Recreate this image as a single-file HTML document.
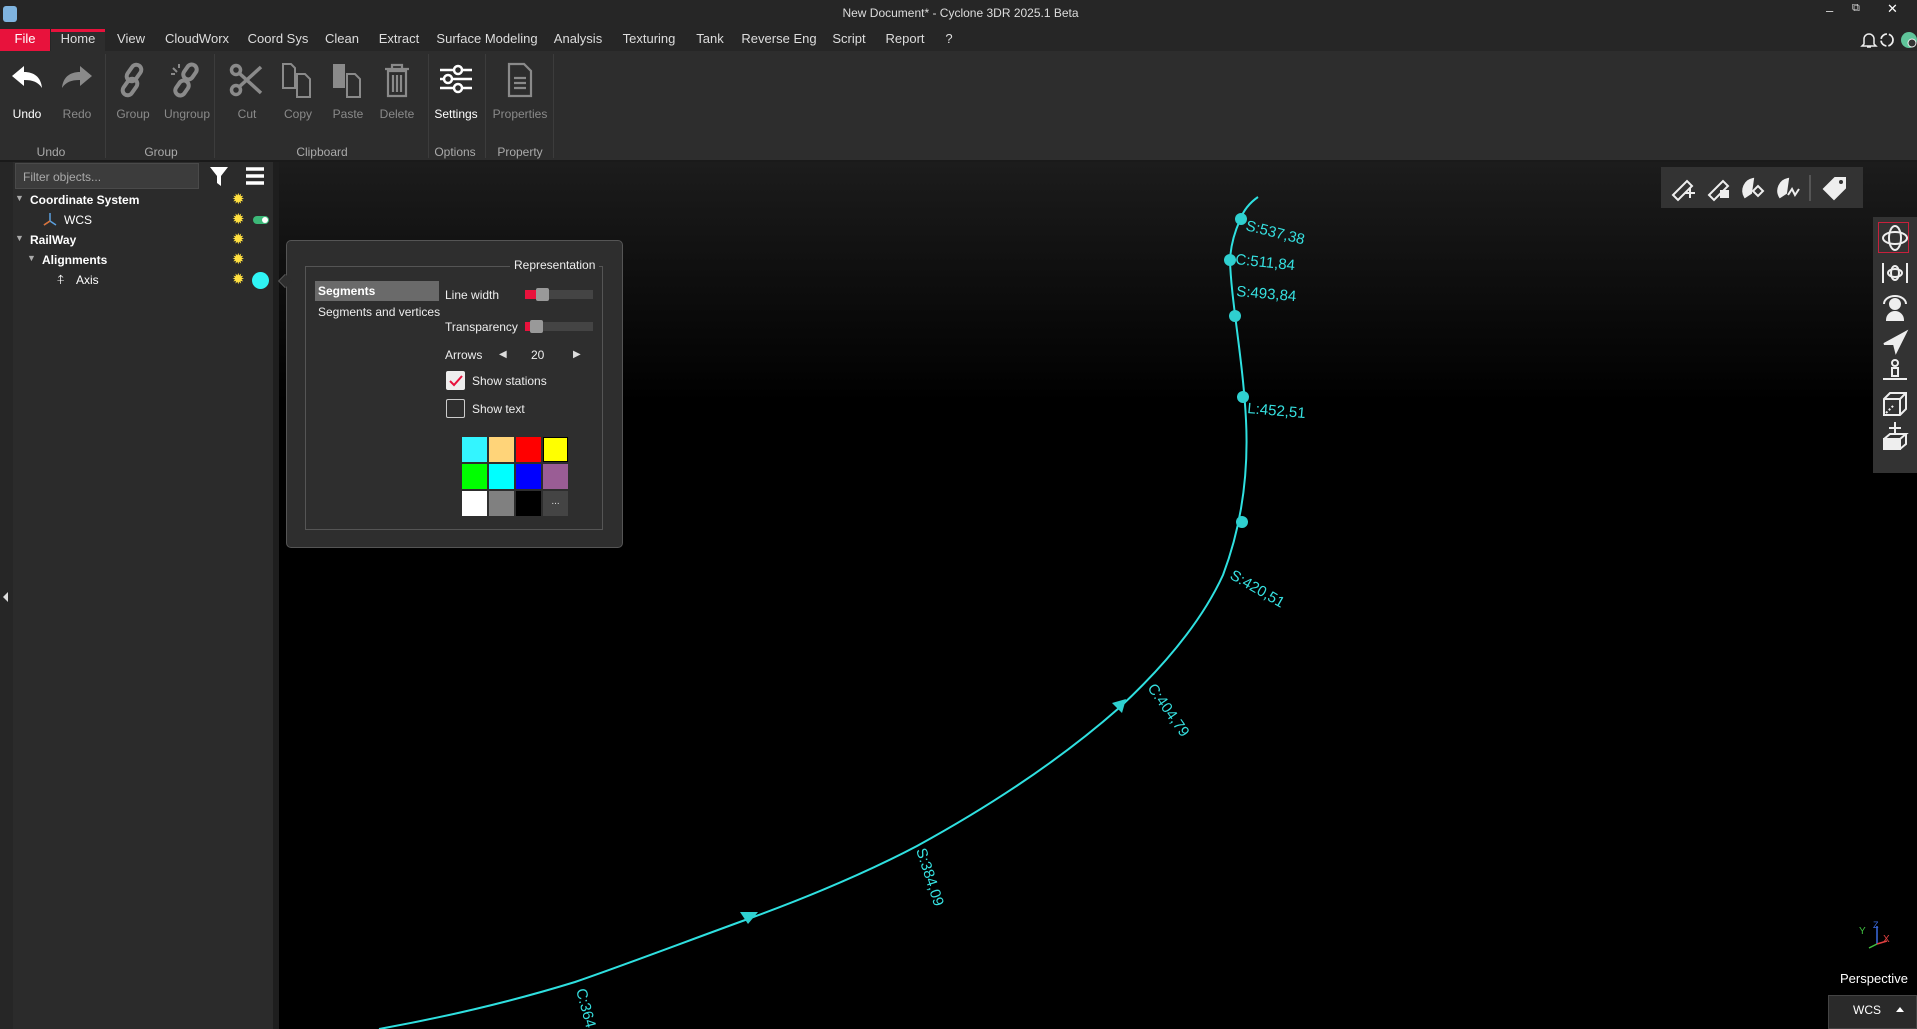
<!DOCTYPE html>
<html><head><meta charset="utf-8"><style>
*{margin:0;padding:0;box-sizing:border-box}
body{width:1917px;height:1029px;overflow:hidden;background:#000;font-family:"Liberation Sans",sans-serif;color:#ddd;position:relative}
.a{position:absolute}
.tab{position:absolute;top:31px;font-size:13px;color:#ddd;transform:translateX(-50%);white-space:nowrap}
.btn{position:absolute;top:107px;font-size:12px;transform:translateX(-50%);color:#8a8a8a}
.gl{position:absolute;top:145px;font-size:12px;color:#aaa;transform:translateX(-50%);white-space:nowrap}
.sep{position:absolute;top:54px;width:1px;height:104px;background:#3c3c3c}
.ico{position:absolute;top:62px;transform:translateX(-50%)}
.tr{position:absolute;font-size:12px;color:#fff}
.sun{position:absolute;left:232px;font-size:15px;line-height:15px;color:#ffe040}
.sw{position:absolute;width:25px;height:25px}
</style></head><body>
<div class="a" style="left:0;top:0;width:1917px;height:29px;background:#262626"></div>
<div class="a" style="left:3px;top:6px;width:14px;height:16px;background:#7fb4e0;border-radius:3px"></div>
<div class="a" style="left:0;top:6px;width:1917px;text-align:center;font-size:12px;color:#ddd;padding-left:4px">New Document* - Cyclone 3DR 2025.1 Beta</div>
<div class="a" style="left:1826px;top:3px;font-size:13px;color:#ddd">–</div>
<div class="a" style="left:1852px;top:2px;font-size:11px;color:#ddd">⧉</div>
<div class="a" style="left:1887px;top:1px;font-size:13px;color:#fff">✕</div>
<div class="a" style="left:0;top:29px;width:1917px;height:22px;background:#262626"></div>
<div class="a" style="left:0;top:29px;width:50px;height:22px;background:#e8123c"></div>
<div class="a" style="left:51px;top:29px;width:54px;height:22px;background:#2d2d2d;border-top:3px solid #e8123c"></div>
<div class="tab" style="left:25px;color:#fff">File</div>
<div class="tab" style="left:78px">Home</div>
<div class="tab" style="left:131px">View</div>
<div class="tab" style="left:197px">CloudWorx</div>
<div class="tab" style="left:278px">Coord Sys</div>
<div class="tab" style="left:342px">Clean</div>
<div class="tab" style="left:399px">Extract</div>
<div class="tab" style="left:487px">Surface Modeling</div>
<div class="tab" style="left:578px">Analysis</div>
<div class="tab" style="left:649px">Texturing</div>
<div class="tab" style="left:710px">Tank</div>
<div class="tab" style="left:779px">Reverse Eng</div>
<div class="tab" style="left:849px">Script</div>
<div class="tab" style="left:905px">Report</div>
<div class="tab" style="left:949px">?</div>
<svg class="a" style="left:1858px;top:31px" width="59" height="18"><path d="M6 13V8a5 5 0 0 1 10 0v5l2 2H4z M9 16h4" fill="none" stroke="#eee" stroke-width="1.5"/><circle cx="29" cy="9" r="6" fill="none" stroke="#eee" stroke-width="1.8" stroke-dasharray="8 2"/><circle cx="51" cy="9" r="8" fill="#5fc49a"/><circle cx="54" cy="12" r="4" fill="#333" stroke="#eee"/></svg>
<div class="a" style="left:0;top:51px;width:1917px;height:109px;background:#2d2d2d"></div>
<div class="a" style="left:0;top:160px;width:1917px;height:2px;background:#1a1a1a"></div>
<div class="sep" style="left:105px"></div><div class="sep" style="left:214px"></div><div class="sep" style="left:428px"></div><div class="sep" style="left:485px"></div><div class="sep" style="left:553px"></div>
<svg class="ico" style="left:27px" width="36" height="30"><path d="M3 14L15 4v6c10 0 17 5 18 16c-4-6-9-8-18-8v6z" fill="#fff"/></svg>
<svg class="ico" style="left:77px" width="36" height="30"><path d="M33 14L21 4v6C11 10 4 15 3 26c4-6 9-8 18-8v6z" fill="#8a8a8a"/></svg>
<svg class="ico" style="left:133px" width="36" height="36"><g fill="none" stroke="#8a8a8a" stroke-width="4"><rect x="14" y="2" width="10" height="18" rx="5" transform="rotate(35 19 11)"/><rect x="10" y="16" width="10" height="18" rx="5" transform="rotate(35 15 25)"/></g></svg>
<svg class="ico" style="left:187px" width="36" height="36"><g fill="none" stroke="#8a8a8a" stroke-width="4"><rect x="16" y="2" width="10" height="16" rx="5" transform="rotate(35 21 10)"/><rect x="8" y="18" width="10" height="16" rx="5" transform="rotate(35 13 26)"/></g><path d="M4 6l4 4M10 2v4M2 12h4" stroke="#8a8a8a" stroke-width="2"/></svg>
<svg class="ico" style="left:247px" width="36" height="36"><g stroke="#8a8a8a" stroke-width="3.5" fill="none"><circle cx="7" cy="28" r="4.5"/><circle cx="7" cy="8" r="4.5"/><path d="M10 11l22 20M10 25L32 5"/></g></svg>
<svg class="ico" style="left:298px" width="36" height="36"><g fill="none" stroke="#8a8a8a" stroke-width="2"><path d="M3 2h8l4 4v20H3z"/><path d="M17 12h8l5 5v18H17z"/></g></svg>
<svg class="ico" style="left:348px" width="36" height="36"><rect x="3" y="2" width="12" height="24" fill="#8a8a8a"/><path d="M17 12h8l5 5v18H17z" fill="none" stroke="#8a8a8a" stroke-width="2"/></svg>
<svg class="ico" style="left:397px" width="36" height="36"><g fill="none" stroke="#8a8a8a" stroke-width="2.2"><path d="M6 7h24M13 7V3h10v4M9 9h18v25H9zM14 13v17M18 13v17M22 13v17"/></g></svg>
<svg class="ico" style="left:456px" width="36" height="36"><g stroke="#fff" stroke-width="2.5" fill="#2d2d2d"><path d="M2 8h32M2 17h32M2 26h32"/><circle cx="20" cy="8" r="4"/><circle cx="10" cy="17" r="4"/><circle cx="20" cy="26" r="4"/></g></svg>
<svg class="ico" style="left:520px" width="36" height="36"><g fill="none" stroke="#8a8a8a" stroke-width="2.2"><path d="M7 2h15l7 7v25H7z M12 16h12M12 21h12M12 26h12"/></g></svg>
<div class="btn" style="left:27px;color:#fff">Undo</div><div class="btn" style="left:77px">Redo</div><div class="btn" style="left:133px">Group</div><div class="btn" style="left:187px">Ungroup</div><div class="btn" style="left:247px">Cut</div><div class="btn" style="left:298px">Copy</div><div class="btn" style="left:348px">Paste</div><div class="btn" style="left:397px">Delete</div><div class="btn" style="left:456px;color:#fff">Settings</div><div class="btn" style="left:520px">Properties</div>
<div class="gl" style="left:51px">Undo</div><div class="gl" style="left:161px">Group</div><div class="gl" style="left:322px">Clipboard</div><div class="gl" style="left:455px">Options</div><div class="gl" style="left:520px">Property</div>
<div class="a" style="left:0;top:162px;width:273px;height:867px;background:#2b2b2b"></div>
<div class="a" style="left:0;top:162px;width:13px;height:867px;background:#262626"></div>
<div class="a" style="left:273px;top:162px;width:6px;height:867px;background:#1e1e1e"></div>
<div class="a" style="left:3px;top:592px;width:0;height:0;border:5px solid transparent;border-right:5px solid #ddd;border-left:0"></div>
<div class="a" style="left:15px;top:163px;width:184px;height:26px;background:#3c3c3c;border:1px solid #4a4a4a;font-size:12px;color:#aaa;padding:6px 7px">Filter objects...</div>
<svg class="a" style="left:208px;top:165px" width="62" height="24"><path d="M2 2h18l-7 9v10l-4-3v-7z" fill="#fff"/><path d="M38 4h18M38 11h18M38 18h18" stroke="#fff" stroke-width="3.5"/></svg>
<div class="tr" style="left:15px;top:193px;font-size:9px;color:#aaa">▼</div><div class="tr" style="left:30px;top:193px;font-weight:bold">Coordinate System</div>
<svg class="a" style="left:43px;top:212px" width="14" height="14"><path d="M7 1v8L1 13M7 9l6 4" stroke="#5aa0e0" stroke-width="1.5" fill="none"/><path d="M7 9l-6 4" stroke="#e07030" stroke-width="1.5"/></svg><div class="tr" style="left:64px;top:213px">WCS</div>
<div class="tr" style="left:15px;top:233px;font-size:9px;color:#aaa">▼</div><div class="tr" style="left:30px;top:233px;font-weight:bold">RailWay</div>
<div class="tr" style="left:27px;top:253px;font-size:9px;color:#aaa">▼</div><div class="tr" style="left:42px;top:253px;font-weight:bold">Alignments</div>
<div class="tr" style="left:57px;top:272px;font-size:13px">⍏</div><div class="tr" style="left:76px;top:273px">Axis</div>
<div class="sun" style="top:192px">✹</div><div class="sun" style="top:212px">✹</div><div class="sun" style="top:232px">✹</div><div class="sun" style="top:252px">✹</div><div class="sun" style="top:272px">✹</div>
<div class="a" style="left:253px;top:216px;width:16px;height:8px;border-radius:4px;background:#3cb878"></div><div class="a" style="left:262px;top:217px;width:6px;height:6px;border-radius:3px;background:#fff"></div>
<div class="a" style="left:252px;top:272px;width:17px;height:17px;border-radius:50%;background:#2ff5f5"></div>
<div class="a" style="left:279px;top:162px;width:1638px;height:240px;background:linear-gradient(#1c1c1c,#000)"></div>
<svg class="a" style="left:0;top:0" width="1917" height="1029">
<path d="M1258,197 Q1245,206 1240,220 Q1231,240 1230,260 C1231,300 1243,360 1246,420 C1249,480 1240,530 1223,575 C1200,625 1160,670 1119,708 C1060,760 990,806 917,846 C860,876 800,900 748,919 C690,940 630,963 575,982 C510,1002 440,1018 379,1029" fill="none" stroke="#2fe0e0" stroke-width="2"/>
<g fill="#2fd0d0"><circle cx="1241" cy="219" r="6"/><circle cx="1230" cy="260" r="6"/><circle cx="1235" cy="316" r="6"/><circle cx="1243" cy="397" r="6"/><circle cx="1242" cy="522" r="6"/>
<path d="M1112,703 l14,-4 l-4,14z"/><path d="M740,912 l18,0 l-10,12z"/></g>
<g fill="#36e0e0" font-size="15" font-family="Liberation Sans">
<text transform="translate(1245,230) rotate(14)">S:537,38</text>
<text transform="translate(1235,264) rotate(6)">C:511,84</text>
<text transform="translate(1236,296) rotate(5)">S:493,84</text>
<text transform="translate(1247,413) rotate(5)">L:452,51</text>
<text transform="translate(1229,578) rotate(30)">S:420,51</text>
<text transform="translate(1147,688) rotate(55)">C:404,79</text>
<text transform="translate(916,850) rotate(72)">S:384,09</text>
<text transform="translate(576,990) rotate(75)">C:364</text>
</g></svg>
<div class="a" style="left:286px;top:240px;width:337px;height:308px;background:#2e2e2e;border:1px solid #555;border-radius:5px"></div>
<div class="a" style="left:280px;top:276px;width:10px;height:10px;background:#2e2e2e;border-left:1px solid #555;border-bottom:1px solid #555;transform:rotate(45deg)"></div>
<div class="a" style="left:305px;top:266px;width:298px;height:264px;border:1px solid #555"></div>
<div class="a" style="left:510px;top:258px;background:#2e2e2e;padding:0 4px;font-size:12px;color:#eee">Representation</div>
<div class="a" style="left:315px;top:281px;width:124px;height:20px;background:#6a6a6a"></div>
<div class="a" style="left:318px;top:284px;font-size:12px;font-weight:bold;color:#fff">Segments</div>
<div class="a" style="left:318px;top:305px;font-size:12px;color:#eee">Segments and vertices</div>
<div class="a" style="left:445px;top:288px;font-size:12px;color:#eee">Line width</div>
<div class="a" style="left:525px;top:290px;width:68px;height:9px;background:#444"></div><div class="a" style="left:525px;top:290px;width:12px;height:9px;background:#e8123c"></div><div class="a" style="left:536px;top:288px;width:13px;height:13px;background:#999;border-radius:2px"></div>
<div class="a" style="left:445px;top:320px;font-size:12px;color:#eee">Transparency</div>
<div class="a" style="left:525px;top:322px;width:68px;height:9px;background:#444"></div><div class="a" style="left:525px;top:322px;width:6px;height:9px;background:#e8123c"></div><div class="a" style="left:530px;top:320px;width:13px;height:13px;background:#999;border-radius:2px"></div>
<div class="a" style="left:445px;top:348px;font-size:12px;color:#eee">Arrows</div>
<div class="a" style="left:499px;top:349px;font-size:10px;color:#ddd">◀</div><div class="a" style="left:531px;top:348px;font-size:12px;color:#eee">20</div><div class="a" style="left:573px;top:349px;font-size:10px;color:#ddd">▶</div>
<div class="a" style="left:446px;top:371px;width:19px;height:19px;background:#eee;border-radius:2px"></div>
<svg class="a" style="left:446px;top:371px" width="19" height="19"><path d="M4 10l4 4l8-9" stroke="#e8123c" stroke-width="2" fill="none"/></svg>
<div class="a" style="left:472px;top:374px;font-size:12px;color:#eee">Show stations</div>
<div class="a" style="left:446px;top:399px;width:19px;height:19px;border:1.5px solid #ccc;border-radius:2px"></div>
<div class="a" style="left:472px;top:402px;font-size:12px;color:#eee">Show text</div>
<div class="sw" style="left:462px;top:437px;background:#33f5ff"></div><div class="sw" style="left:489px;top:437px;background:#ffd479"></div><div class="sw" style="left:516px;top:437px;background:#ff0000"></div><div class="sw" style="left:543px;top:437px;background:#ffff00;border:1px solid #000"></div>
<div class="sw" style="left:462px;top:464px;background:#00ff00"></div><div class="sw" style="left:489px;top:464px;background:#00ffff"></div><div class="sw" style="left:516px;top:464px;background:#0000ff"></div><div class="sw" style="left:543px;top:464px;background:#9a5d95"></div>
<div class="sw" style="left:462px;top:491px;background:#fff"></div><div class="sw" style="left:489px;top:491px;background:#808080"></div><div class="sw" style="left:516px;top:491px;background:#000"></div><div class="sw" style="left:543px;top:491px;background:#444;font-size:10px;color:#ddd;text-align:center;line-height:22px">...</div>
<div class="a" style="left:1661px;top:167px;width:202px;height:41px;background:#333"></div>
<svg class="a" style="left:1661px;top:167px" width="202" height="41" fill="none" stroke="#eee" stroke-width="2">
<path d="M12 28l14-14l5 5l-14 14z M24 26h10M29 21v10"/><path d="M48 28l14-14l5 5l-14 14z"/><rect x="60" y="24" width="7" height="6" fill="#eee"/>
<path d="M92 12a12 12 0 0 0-8 18l6-4z" fill="#eee"/><path d="M92 24l5 5l5-5l-5-5z"/>
<path d="M127 12a12 12 0 0 0-8 18l6-4z" fill="#eee"/><path d="M127 28l4-6l3 6l4-6"/>
<path d="M149 8v26" stroke="#555"/>
<path d="M163 22l11-11h10v10l-11 11z" fill="#eee"/><circle cx="180" cy="15" r="2" fill="#333" stroke="none"/>
</svg>
<div class="a" style="left:1873px;top:217px;width:44px;height:256px;background:#333"></div>
<div class="a" style="left:1878px;top:222px;width:31px;height:31px;border:1.5px solid #c8203c"></div>
<svg class="a" style="left:1873px;top:217px" width="44" height="256" fill="none" stroke="#eee" stroke-width="2">
<ellipse cx="22" cy="21" rx="12" ry="6"/><ellipse cx="22" cy="21" rx="6" ry="12"/>
<ellipse cx="22" cy="56" rx="7" ry="4"/><ellipse cx="22" cy="56" rx="4" ry="7"/><path d="M10 46v20M34 46v20"/>
<circle cx="22" cy="87" r="5" fill="#eee"/><path d="M14 103a8 8 0 0 1 16 0z" fill="#eee"/><path d="M11 87a11 8 0 0 1 22 0"/>
<path d="M11 127l22-12l-10 20l-2-8z" fill="#eee"/>
<circle cx="22" cy="146" r="3"/><path d="M19 151h6v8h-6z M10 162h24"/>
<path d="M11 182l6-6h16v16l-6 6H11z M11 182h16v16M27 182l6-6"/><path d="M13 196l8-8" stroke-dasharray="2 2"/>
<path d="M11 222h16v10H11z M11 222l6-5h16l-6 5M33 217v10l-6 5" fill="none"/><path d="M11 222h16v10H11z" fill="#eee"/><path d="M16 211h12M22 205v12"/>
</svg>
<svg class="a" style="left:1855px;top:920px" width="45" height="30"><path d="M22 24V6" stroke="#3a6ae0" stroke-width="1.5"/><path d="M22 24l-8 4" stroke="#40c040" stroke-width="1.5"/><path d="M22 24l10-3" stroke="#e04040" stroke-width="1.5"/><text x="28" y="22" fill="#e04040" font-size="10">X</text><text x="4" y="14" fill="#40c040" font-size="10">Y</text><text x="18" y="8" fill="#3a6ae0" font-size="9">Z</text></svg>
<div class="a" style="left:1840px;top:971px;font-size:13px;color:#fff">Perspective</div>
<div class="a" style="left:1828px;top:995px;width:89px;height:34px;background:#2a2a2a;border:1px solid #444"></div>
<div class="a" style="left:1853px;top:1003px;font-size:12px;color:#fff">WCS</div>
<div class="a" style="left:1896px;top:1007px;border:4px solid transparent;border-bottom:5px solid #fff;border-top:0"></div>
</body></html>
